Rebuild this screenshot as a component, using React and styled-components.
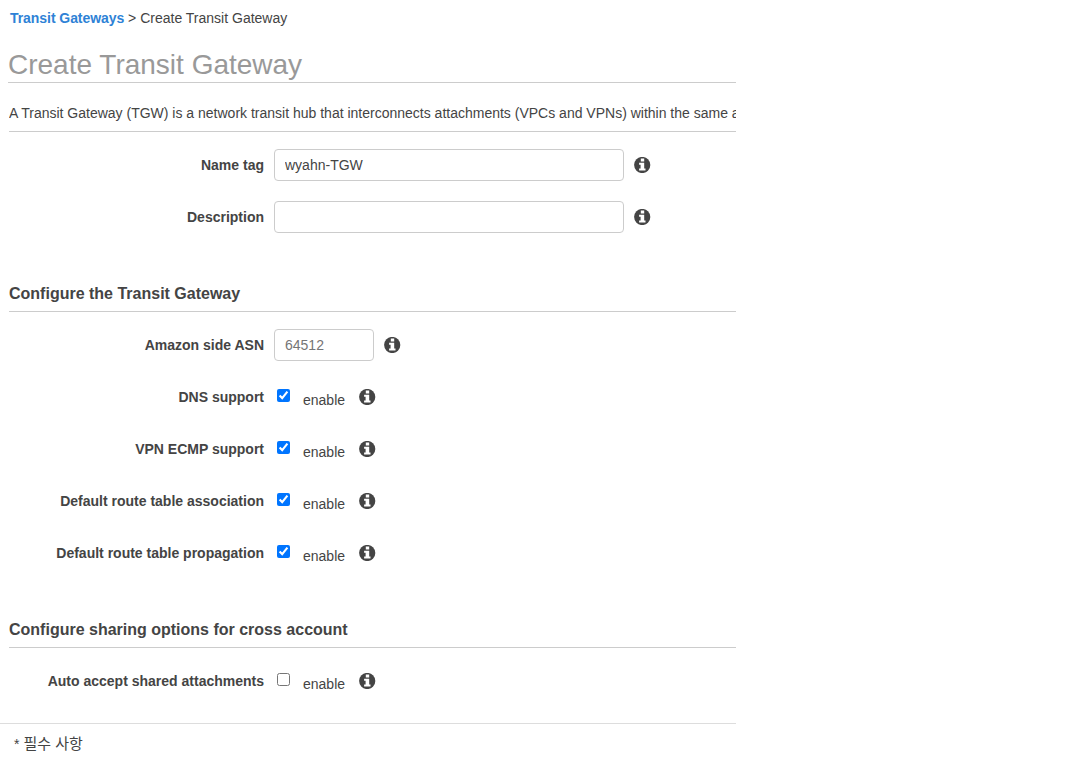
import React from 'react';
import styled, { createGlobalStyle } from 'styled-components';

const Global = createGlobalStyle`
  *, *::before, *::after { box-sizing: border-box; }
  body { margin: 0; background: #fff; color: #444; font: 14px/20px "Liberation Sans", "Noto Sans CJK KR", sans-serif; }
`;
const Page = styled.main`width: 736px; height: 766px; overflow: hidden;`;
const Breadcrumb = styled.nav`height: 36px; padding: 8px 10px; white-space: pre;`;
const Crumb = styled.a`color: #2e82d6; font-weight: bold; text-decoration: none; letter-spacing: -0.06px;`;
const Content = styled.div`padding-left: 9px;`;
const Title = styled.h1`
  margin: 0 0 0 -1px; height: 47px; padding-top: 9px; border-bottom: 1px solid #ccc;
  font-size: 28px; line-height: 40px; font-weight: normal; color: #999;
`;
const Intro = styled.p`
  margin: 0; height: 49px; padding-top: 20px; border-bottom: 1px solid #ccc;
  white-space: nowrap; overflow: hidden;
`;
const Fields = styled.div`padding-top: 17px; height: ${p => p.$height}px;`;
const Row = styled.div`display: flex; align-items: center; height: 32px; margin-bottom: 20px;`;
const Label = styled.label`width: 255px; margin-right: 10px; text-align: right; font-weight: bold;`;
const TextInput = styled.input`
  width: ${p => p.$width}px; height: 32px; padding: 0 10px; margin: 0 10px 0 0;
  border: 1px solid #ccc; border-radius: 4px; background: #fff; color: #444; font: inherit; outline: none;
  &::placeholder { color: #757575; opacity: 1; }
`;
const Check = styled.input`width: 13px; height: 13px; margin: 0 13px 3px 3px;`;
const CheckText = styled.span`width: 56px; padding-top: 6px;`;
const Heading = styled.h2`
  margin: 0; height: 29px; padding-top: 1px; border-bottom: 1px solid #ccc; font-size: 16px; line-height: 20px;
`;
const Footer = styled.footer`
  display: flex; gap: 4px; height: 43px; border-top: 1px solid #ddd; padding: 10px 14px;
`;
const Korean = styled.span`font-size: 15px;`;
const Icon = styled.svg`width: 17px; height: 16px; flex: none; display: block;`;

const Info = () => (
  <Icon viewBox="0 0 17 16">
    <circle cx="8.2" cy="8" r="8.1" fill="#444" />
    <path fill="#fff" d="M6.8 1.6h3.4v3H6.8zM5.1 5.8h5.1v5.6h1.3v2H5.1v-2h1.5V7.7H5.1z" />
  </Icon>
);
const TextRow = ({ label, width, ...rest }) => (
  <Row><Label>{label}</Label><TextInput $width={width} {...rest} /><Info /></Row>
);
const CheckRow = ({ label, checked }) => (
  <Row><Label>{label}</Label><Check type="checkbox" defaultChecked={checked} /><CheckText>enable</CheckText><Info /></Row>
);

export default function App() {
  return (
    <Page>
      <Global />
      <Breadcrumb><Crumb>Transit Gateways</Crumb> &gt; Create Transit Gateway</Breadcrumb>
      <Content>
        <Title>Create Transit Gateway</Title>
        <Intro>A Transit Gateway (TGW) is a network transit hub that interconnects attachments (VPCs and VPNs) within the same a</Intro>
        <Fields $height={151}>
          <TextRow label="Name tag" width={350} defaultValue="wyahn-TGW" />
          <TextRow label="Description" width={350} />
        </Fields>
        <Heading>Configure the Transit Gateway</Heading>
        <Fields $height={307}>
          <TextRow label="Amazon side ASN" width={100} placeholder="64512" />
          <CheckRow label="DNS support" checked />
          <CheckRow label="VPN ECMP support" checked />
          <CheckRow label="Default route table association" checked />
          <CheckRow label="Default route table propagation" checked />
        </Fields>
        <Heading>Configure sharing options for cross account</Heading>
        <Fields $height={75}>
          <CheckRow label="Auto accept shared attachments" />
        </Fields>
      </Content>
      <Footer><span>*</span><Korean>필수 사항</Korean></Footer>
    </Page>
  );
}
